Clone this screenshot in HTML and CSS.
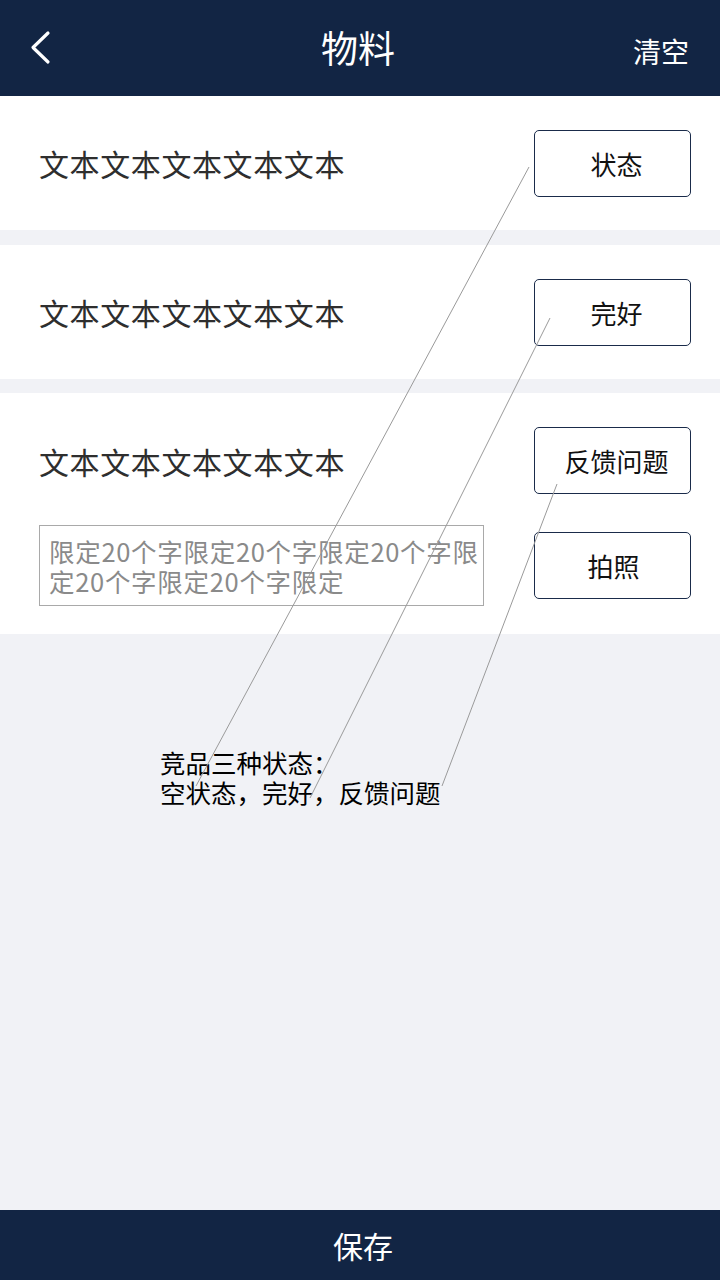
FILE: index.html
```html
<!DOCTYPE html>
<html lang="zh">
<head>
<meta charset="utf-8">
<title>物料</title>
<link rel="stylesheet" href="styles.css">
</head>
<body>
<div class="page">
  <header class="topbar">
    <span class="back" aria-label="返回">
      <svg width="30" height="40" viewBox="0 0 30 40"><polyline points="19,5 4,19.5 19,34" fill="none" stroke="#fff" stroke-width="3.2" stroke-linecap="round" stroke-linejoin="round"/></svg>
    </span>
    <h1 class="title">物料</h1>
    <span class="clear">清空</span>
  </header>

  <main class="content">
    <section class="item">
      <div class="item-line">
        <span class="label">文本文本文本文本文本</span>
        <button class="btn">状态</button>
      </div>
    </section>
    <section class="item">
      <div class="item-line">
        <span class="label">文本文本文本文本文本</span>
        <button class="btn">完好</button>
      </div>
    </section>
    <section class="item item-tall">
      <div class="item-line">
        <span class="label">文本文本文本文本文本</span>
        <button class="btn">反馈问题</button>
      </div>
      <div class="item-line item-line-second">
        <div class="note">限定20个字限定20个字限定20个字限定20个字限定20个字限定</div>
        <button class="btn btn-photo">拍照</button>
      </div>
    </section>

    <div class="annotation">
      <p class="annotation-line">竞品三种状态：</p>
      <p class="annotation-line">空状态，完好，反馈问题</p>
    </div>
  </main>

  <footer class="savebar">保存</footer>

  <svg class="callouts" width="720" height="1280" viewBox="0 0 720 1280">
    <line x1="529" y1="167" x2="196" y2="786"/>
    <line x1="550" y1="318" x2="310" y2="798"/>
    <line x1="557" y1="484" x2="442" y2="786"/>
  </svg>
</div>
</body>
</html>
```
FILE: styles.css
```css
html, body {
  margin: 0;
  padding: 0;
}
body {
  font-family: "Noto Sans CJK SC", "Noto Sans", sans-serif;
  background: #f1f2f6;
}
.page {
  position: relative;
  width: 720px;
  height: 1280px;
  display: flex;
  flex-direction: column;
  overflow: hidden;
}
.topbar {
  height: 96px;
  flex: none;
  background: #122544;
  display: grid;
  grid-template-columns: 1fr auto 1fr;
  align-items: center;
  color: #fff;
}
.back {
  display: flex;
  align-items: center;
  padding-left: 29px;
}
.title {
  margin: 0;
  font-size: 37px;
  font-weight: 400;
  line-height: 1;
  padding-bottom: 2px;
  padding-right: 4px;
}
.clear {
  justify-self: end;
  padding-right: 31px;
  font-size: 28px;
  line-height: 1;
  padding-top: 6px;
}
.content {
  flex: 1;
  display: flex;
  flex-direction: column;
  gap: 15px;
}
.item {
  background: #fff;
  height: 134px;
  padding: 0 29px 0 39px;
  display: flex;
  flex-direction: column;
  justify-content: center;
}
.item-tall {
  height: auto;
  padding-top: 34px;
  padding-bottom: 28px;
  margin-top: -1px;
}
.item-line {
  display: flex;
  align-items: center;
  justify-content: space-between;
}
.item-line-second {
  margin-top: 31px;
}
.label {
  font-size: 30px;
  letter-spacing: 0.6px;
  color: #2e2e2e;
  line-height: 1;
}
.btn {
  width: 157px;
  height: 67px;
  box-sizing: border-box;
  border: 1px solid #1a2b4a;
  border-radius: 5px;
  background: #fff;
  font-family: inherit;
  font-size: 26px;
  color: #111;
  padding: 0 0 0 8px;
  cursor: pointer;
}
.btn-photo {
  padding-left: 2px;
}
.note {
  width: 445px;
  height: 81px;
  box-sizing: border-box;
  border: 1px solid #a9a9a9;
  padding: 10px 0 0 9px;
  font-size: 25.5px;
  letter-spacing: 0.7px;
  line-height: 30px;
  color: #8a8a8a;
  word-break: break-all;
  overflow: hidden;
}
.annotation {
  margin: 98px 0 0 160px;
  font-size: 25.5px;
  color: #000;
}
.annotation-line {
  margin: 0;
  height: 30px;
  line-height: 30px;
}
.savebar {
  height: 70px;
  flex: none;
  background: #122544;
  color: #fff;
  font-size: 30px;
  display: flex;
  align-items: center;
  justify-content: center;
  padding-left: 6px;
}
.callouts {
  position: absolute;
  left: 0;
  top: 0;
  pointer-events: none;
}
.callouts line {
  stroke: #9a9a9a;
  stroke-width: 1;
}
```
